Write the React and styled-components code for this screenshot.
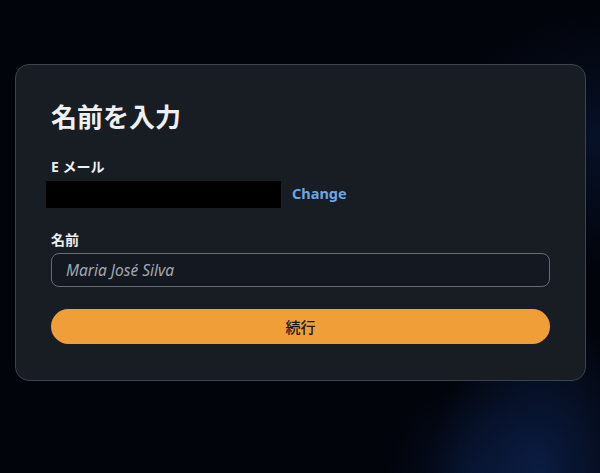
import React from 'react';
import styled, {createGlobalStyle} from 'styled-components';

const GlobalStyle = createGlobalStyle`
    html, body
    {
        margin: 0;
        padding: 0;
        height: 100%;
    }
    body
    {
        font-family: "Noto Sans", "Noto Sans CJK JP", sans-serif;
        background-color: #02040b;
        background-image:
            radial-gradient(ellipse 150px 230px at 540px 473px, rgba(18, 48, 110, 0.55), transparent 72%),
            radial-gradient(ellipse 220px 180px at 600px 140px, rgba(16, 40, 90, 0.35), transparent 70%),
            radial-gradient(ellipse 120px 120px at 470px 473px, rgba(10, 30, 75, 0.4), transparent 70%);
        overflow: hidden;
    }
`;

function App()
{
    return (
        <>
            <GlobalStyle/>
            <Page>
                <Card>
                    <Title>名前を入力</Title>
                    <Label>E メール</Label>
                    <EmailRow>
                        <Redacted/>
                        <ChangeLink href="#">Change</ChangeLink>
                    </EmailRow>
                    <Label $top={22}>名前</Label>
                    <NameInput placeholder="Maria José Silva"/>
                    <ContinueButton>続行</ContinueButton>
                </Card>
            </Page>
        </>
    );
}

const Page = styled.div`
    height: 473px;
    padding: 64px 14px 0 15px;
    box-sizing: border-box;
`;

const Card = styled.div`
    width: 571px;
    height: 317px;
    box-sizing: border-box;
    padding: 35px 35px 0 35px;
    background-color: #181c23;
    border: 1px solid #3d434c;
    border-radius: 14px;
    display: flex;
    flex-direction: column;
`;

const Title = styled.h1`
    margin: 0;
    font-size: 26px;
    line-height: 34px;
    font-weight: 700;
    color: #eef0f2;
`;

const Label = styled.div`
    margin-top: ${props => props.$top || 23}px;
    font-size: 14px;
    line-height: 20px;
    font-weight: 700;
    color: #eceef0;
`;

const EmailRow = styled.div`
    display: flex;
    align-items: center;
    gap: 11px;
    margin: 4px 0 0 -5px;
`;

const Redacted = styled.div`
    width: 235px;
    height: 27px;
    background-color: #000;
`;

const ChangeLink = styled.a`
    font-size: 14.5px;
    line-height: 20px;
    font-weight: 700;
    color: #6aa7e2;
    text-decoration: none;
    margin-bottom: 4px;
`;

const NameInput = styled.input`
    margin-top: 3px;
    height: 34px;
    box-sizing: border-box;
    padding: 0 14px;
    background-color: #141820;
    border: 1px solid #646b75;
    border-radius: 8px;
    font-family: "Noto Sans", sans-serif;
    font-size: 15.5px;
    color: #e0e3e6;
    outline: none;
    &::placeholder
    {
        color: #a2a8b0;
        font-style: italic;
    }
`;

const ContinueButton = styled.button`
    margin-top: 22px;
    height: 35px;
    border: none;
    border-radius: 18px;
    background-color: #f09f38;
    font-family: "Noto Sans", "Noto Sans CJK JP", sans-serif;
    font-size: 15px;
    font-weight: 500;
    color: #16191f;
    cursor: pointer;
`;

export default App;
